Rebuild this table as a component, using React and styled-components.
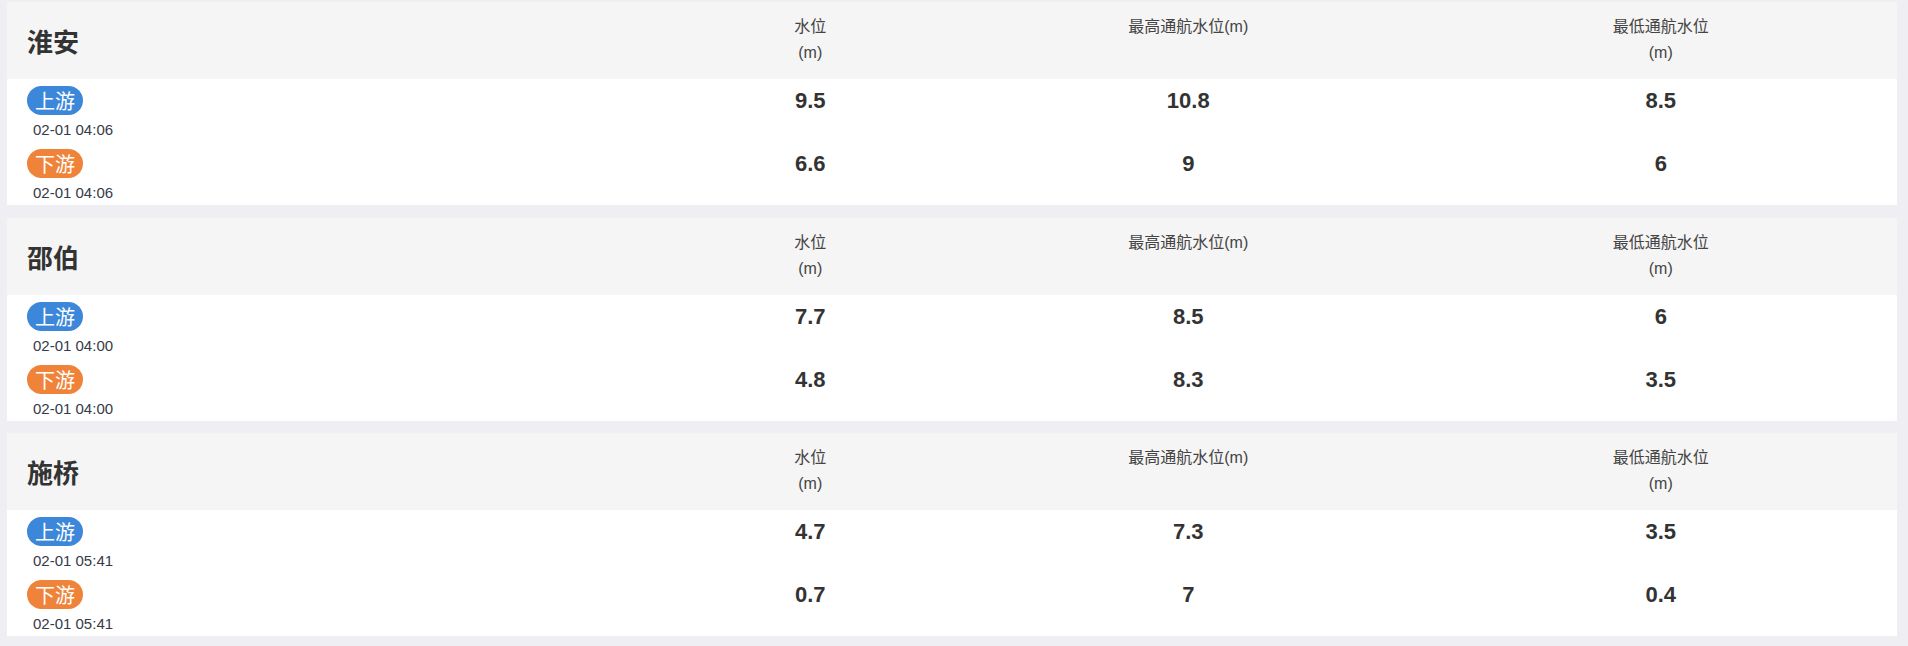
import React from "react";
import styled, { createGlobalStyle } from "styled-components";

const Global = createGlobalStyle`
  html, body {
    margin: 0;
    padding: 0;
    background: #eeeef3;
    font-family: "Liberation Sans", Arial, "Noto Sans CJK SC", sans-serif;
    color: #333;
  }
`;

const Page = styled.div`
  padding: 2px 11px 0 7px;
  display: flex;
  flex-direction: column;
  gap: 12.5px;
`;

const Card = styled.section`
  background: #fff;
`;

const Grid = styled.div`
  display: grid;
  grid-template-columns: 35% 15% 25% 25%;
`;

const Header = styled(Grid)`
  height: 77px;
  background: #f5f5f5;
`;

const Title = styled.h2`
  margin: 0;
  padding-left: 20px;
  align-self: center;
  font-size: 26px;
  font-weight: bold;
  color: #333;
  font-family: "Liberation Sans", "Noto Sans CJK SC", sans-serif;
`;

const Label = styled.div`
  padding-top: 12px;
  text-align: center;
  font-size: 16px;
  line-height: 26px;
  color: #444;
  font-family: "Liberation Sans", "Noto Sans CJK SC", sans-serif;
`;

const Row = styled(Grid)`
  height: 63px;
`;

const Place = styled.div`
  padding: 7px 0 0 20px;
  display: flex;
  flex-direction: column;
  align-items: flex-start;
`;

const Badge = styled.span`
  display: inline-flex;
  align-items: center;
  height: 29px;
  padding: 0 8px;
  border-radius: 15px;
  font-size: 20px;
  color: #fff;
  background: ${(p) => (p.$down ? "#f0833a" : "#3c87da")};
  font-family: "Noto Sans CJK SC", sans-serif;
`;

const Time = styled.div`
  margin-top: 7px;
  padding-left: 6px;
  font-family: "Liberation Sans", Arial, sans-serif;
  font-size: 15px;
  line-height: 16px;
  color: #353b48;
`;

const Value = styled.div`
  padding-top: 7px;
  line-height: 29px;
  text-align: center;
  font-size: 22px;
  font-weight: bold;
  color: #333;
`;

const stations = [
  {
    name: "淮安",
    rows: [
      { dir: "上游", time: "02-01 04:06", v: ["9.5", "10.8", "8.5"] },
      { dir: "下游", time: "02-01 04:06", v: ["6.6", "9", "6"] },
    ],
  },
  {
    name: "邵伯",
    rows: [
      { dir: "上游", time: "02-01 04:00", v: ["7.7", "8.5", "6"] },
      { dir: "下游", time: "02-01 04:00", v: ["4.8", "8.3", "3.5"] },
    ],
  },
  {
    name: "施桥",
    rows: [
      { dir: "上游", time: "02-01 05:41", v: ["4.7", "7.3", "3.5"] },
      { dir: "下游", time: "02-01 05:41", v: ["0.7", "7", "0.4"] },
    ],
  },
];

export default function App() {
  return (
    <>
      <Global />
      <Page>
        {stations.map((s) => (
          <Card key={s.name}>
            <Header>
              <Title>{s.name}</Title>
              <Label>
                水位
                <br />
                (m)
              </Label>
              <Label>最高通航水位(m)</Label>
              <Label>
                最低通航水位
                <br />
                (m)
              </Label>
            </Header>
            {s.rows.map((r) => (
              <Row key={r.dir}>
                <Place>
                  <Badge $down={r.dir === "下游"}>{r.dir}</Badge>
                  <Time>{r.time}</Time>
                </Place>
                {r.v.map((v, i) => (
                  <Value key={i}>{v}</Value>
                ))}
              </Row>
            ))}
          </Card>
        ))}
      </Page>
    </>
  );
}
